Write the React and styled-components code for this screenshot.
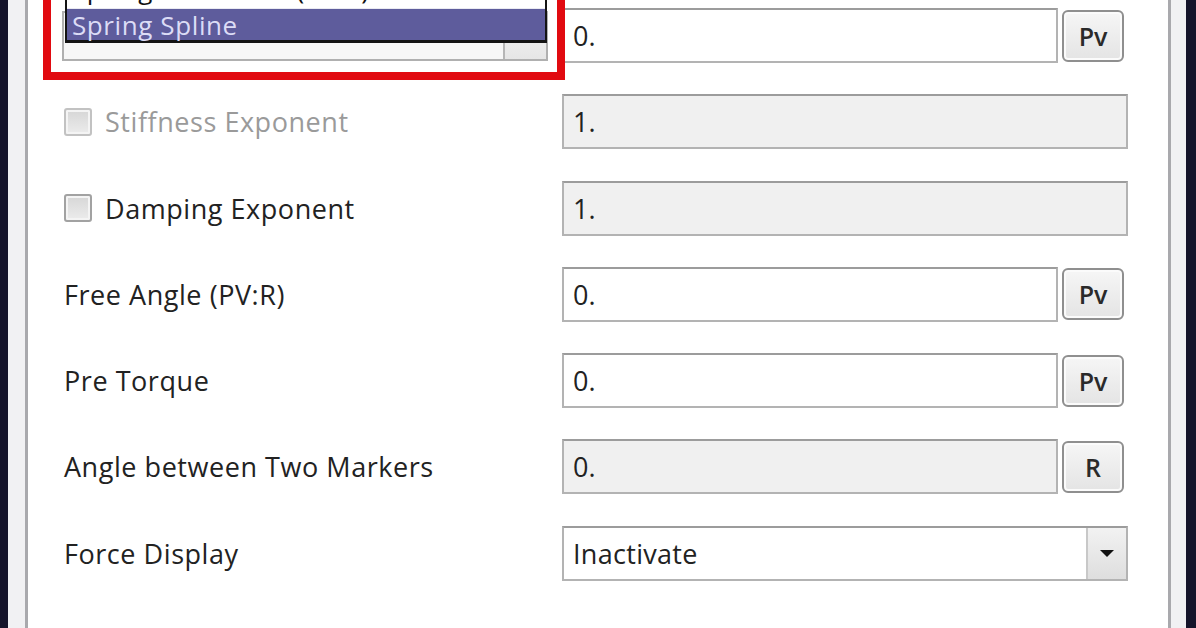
import React from 'react'
import styled, { createGlobalStyle } from 'styled-components'

const GlobalStyle = createGlobalStyle`
    html, body {
        margin: 0;
        padding: 0;
        background: #ffffff;
        overflow: hidden;
    }
    * {
        box-sizing: border-box;
    }
`

const Screen = styled.div`
    width: 1196px;
    height: 628px;
    display: flex;
    overflow: hidden;
    font-family: "Open Sans", "Noto Sans", sans-serif;
    font-size: 27px;
    color: #222222;
`
const Backdrop = styled.div`
    width: ${props => props.w}px;
    background-color: #15142a;
`
const Frame = styled.div`
    width: ${props => props.w}px;
    background-color: #f1f1f3;
    border-left: ${props => props.side === "right" ? "3px solid #a9a9ad" : "none"};
    border-right: ${props => props.side === "left" ? "3px solid #a9a9ad" : "none"};
`
const Content = styled.div`
    flex: 1;
    background-color: #ffffff;
    position: relative;
    padding: 0 40px 0 36px;
`
const Form = styled.div`
    display: grid;
    grid-template-columns: 498px 1fr;
    grid-auto-rows: 86.25px;
    margin-top: -7.6px;
`
const Label = styled.div`
    display: flex;
    align-items: center;
    gap: 13px;
    color: ${props => props.disabled ? "#9a9a9a" : "#222222"};
    letter-spacing: 0.55px;
    white-space: nowrap;
`
const Check = styled.span`
    width: 28px;
    height: 28px;
    border: 2px solid ${props => props.disabled ? "#c2c2c2" : "#a2a2a2"};
    border-radius: 3px;
    background: linear-gradient(#d6d6d6, #ececec);
    box-shadow: inset 0 0 0 2px #f4f4f4;
    flex-shrink: 0;
`
const Field = styled.div`
    display: flex;
    align-items: center;
    gap: 4px;
    padding-right: ${props => props.withButton ? "4px" : "0"};
`
const Input = styled.div`
    flex: 1;
    height: 55px;
    display: flex;
    align-items: center;
    padding-left: 9px;
    border: 2px solid #b3b3b3;
    border-top-color: #9c9c9c;
    background-color: ${props => props.disabled ? "#f0f0f0" : "#ffffff"};
`
const SideButton = styled.div`
    width: 62px;
    height: 52px;
    display: flex;
    align-items: center;
    justify-content: center;
    border: 2px solid #8f8f8f;
    border-radius: 6px;
    background: linear-gradient(#f6f6f6, #e4e4e4);
    box-shadow: inset 0 0 0 2px #fbfbfb;
    font-size: 25px;
    font-weight: 600;
    color: #2a2a2a;
`
const Select = styled.div`
    flex: 1;
    height: 55px;
    display: flex;
    border: 2px solid #b3b3b3;
    border-top-color: #9c9c9c;
    background-color: #ffffff;
`
const SelectText = styled.div`
    flex: 1;
    display: flex;
    align-items: center;
    padding-left: 9px;
    letter-spacing: 0.3px;
`
const SelectArrow = styled.div`
    width: 40px;
    display: flex;
    align-items: center;
    justify-content: center;
    border-left: 2px solid #c8c8c8;
    background: linear-gradient(#f2f2f2, #dedede);
`
const Triangle = styled.span`
    width: 0;
    height: 0;
    border-left: 7px solid transparent;
    border-right: 7px solid transparent;
    border-top: 7px solid #111111;
`
const Combo = styled.div`
    position: relative;
    margin-left: -2px;
    width: 486px;
    height: 50px;
    display: flex;
    border: 2px solid #b0b0b0;
    background-color: #f7f7f7;
`
const ComboArrow = styled.div`
    margin-left: auto;
    width: 43px;
    border-left: 2px solid #b6b6b6;
    background: linear-gradient(#f6f6f6, #e6e6e6);
`
const Popup = styled.div`
    position: absolute;
    left: 1px;
    right: -1px;
    bottom: 16px;
    border: 2px solid #141414;
    border-bottom-width: 3px;
    background-color: #ffffff;
    z-index: 2;
`
const PopupItem = styled.div`
    height: ${props => props.selected ? "32px" : "34px"};
    line-height: ${props => props.selected ? "32px" : "30px"};
    padding-left: 5px;
    overflow: ${props => props.selected ? "visible" : "hidden"};
    white-space: nowrap;
    font-size: 26px;
    letter-spacing: 0.6px;
    background-color: ${props => props.selected ? "#5e5c9c" : "#ffffff"};
    color: ${props => props.selected ? "#dcdcf6" : "#111111"};
    border-top: ${props => props.selected ? "1px solid #eaeaf2" : "none"};
`
const Highlight = styled.div`
    position: absolute;
    left: 15px;
    top: -20px;
    width: 522px;
    height: 100px;
    border: 8px solid #e10a10;
    pointer-events: none;
    z-index: 3;
`

const rows = [
    { label: "Stiffness Exponent", check: true, disabled: true, value: "1.", fieldDisabled: true },
    { label: "Damping Exponent", check: true, value: "1.", fieldDisabled: true },
    { label: "Free Angle (PV:R)", value: "0.", button: "Pv" },
    { label: "Pre Torque", value: "0.", button: "Pv" },
    { label: "Angle between Two Markers", value: "0.", button: "R", fieldDisabled: true },
]

const App = () => {
    return (
        <Screen>
            <GlobalStyle />
            <Backdrop w={8} />
            <Frame w={20} side="left" />
            <Content>
                <Highlight />
                <Form>
                    <Label>
                        <Combo>
                            <ComboArrow />
                            <Popup>
                                <PopupItem>Spring Coefficient(PV:R)</PopupItem>
                                <PopupItem selected>Spring Spline</PopupItem>
                            </Popup>
                        </Combo>
                    </Label>
                    <Field withButton>
                        <Input>0.</Input>
                        <SideButton>Pv</SideButton>
                    </Field>

                    {rows.map(row => (
                        <React.Fragment key={row.label}>
                            <Label disabled={row.disabled}>
                                {row.check && <Check disabled={row.disabled} />}
                                {row.label}
                            </Label>
                            <Field withButton={!!row.button}>
                                <Input disabled={row.fieldDisabled}>{row.value}</Input>
                                {row.button && <SideButton>{row.button}</SideButton>}
                            </Field>
                        </React.Fragment>
                    ))}

                    <Label>Force Display</Label>
                    <Field>
                        <Select>
                            <SelectText>Inactivate</SelectText>
                            <SelectArrow>
                                <Triangle />
                            </SelectArrow>
                        </Select>
                    </Field>
                </Form>
            </Content>
            <Frame w={18} side="right" />
            <Backdrop w={10} />
        </Screen>
    )
}

export default App
